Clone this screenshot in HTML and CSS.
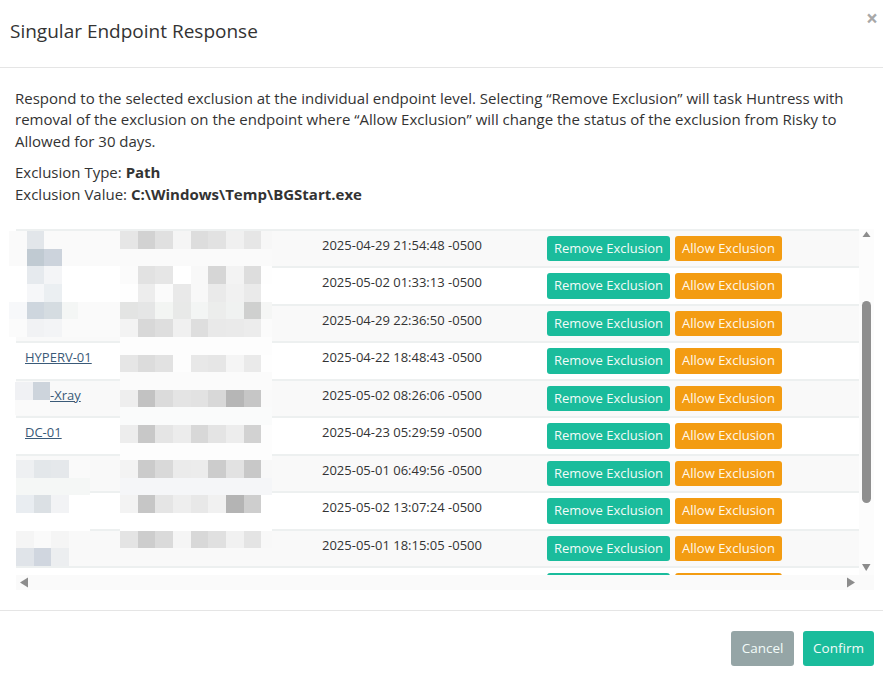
FILE: index.html
```html
<!DOCTYPE html>
<html lang="en">
<head>
<meta charset="utf-8">
<title>Singular Endpoint Response</title>
<link rel="stylesheet" href="styles.css">
</head>
<body>
<div class="modal">
  <header class="modal-header">
    <h4 class="modal-title">Singular Endpoint Response</h4>
    <button class="close" type="button">×</button>
  </header>
  <section class="modal-body">
    <p class="intro">Respond to the selected exclusion at the individual endpoint level. Selecting “Remove Exclusion” will task Huntress with removal of the exclusion on the endpoint where “Allow Exclusion” will change the status of the exclusion from Risky to Allowed for 30 days.</p>
    <p class="meta">Exclusion Type: <b>Path</b><br>Exclusion Value: <b>C:\Windows\Temp\BGStart.exe</b></p>
    <div class="frame">
      <div class="viewport">
        <div class="row odd"><span class="name"></span><span class="date">2025-04-29 21:54:48 -0500</span><span class="actions"><a class="btn teal">Remove Exclusion</a><a class="btn orange">Allow Exclusion</a></span></div>
        <div class="row"><span class="name"></span><span class="date">2025-05-02 01:33:13 -0500</span><span class="actions"><a class="btn teal">Remove Exclusion</a><a class="btn orange">Allow Exclusion</a></span></div>
        <div class="row odd"><span class="name"></span><span class="date">2025-04-29 22:36:50 -0500</span><span class="actions"><a class="btn teal">Remove Exclusion</a><a class="btn orange">Allow Exclusion</a></span></div>
        <div class="row"><span class="name"><a href="#">HYPERV-01</a></span><span class="date">2025-04-22 18:48:43 -0500</span><span class="actions"><a class="btn teal">Remove Exclusion</a><a class="btn orange">Allow Exclusion</a></span></div>
        <div class="row odd"><span class="name"><a href="#" class="xray">-Xray</a></span><span class="date">2025-05-02 08:26:06 -0500</span><span class="actions"><a class="btn teal">Remove Exclusion</a><a class="btn orange">Allow Exclusion</a></span></div>
        <div class="row"><span class="name"><a href="#">DC-01</a></span><span class="date">2025-04-23 05:29:59 -0500</span><span class="actions"><a class="btn teal">Remove Exclusion</a><a class="btn orange">Allow Exclusion</a></span></div>
        <div class="row odd"><span class="name"></span><span class="date">2025-05-01 06:49:56 -0500</span><span class="actions"><a class="btn teal">Remove Exclusion</a><a class="btn orange">Allow Exclusion</a></span></div>
        <div class="row"><span class="name"></span><span class="date">2025-05-02 13:07:24 -0500</span><span class="actions"><a class="btn teal">Remove Exclusion</a><a class="btn orange">Allow Exclusion</a></span></div>
        <div class="row odd"><span class="name"></span><span class="date">2025-05-01 18:15:05 -0500</span><span class="actions"><a class="btn teal">Remove Exclusion</a><a class="btn orange">Allow Exclusion</a></span></div>
        <div class="row"><span class="name"></span><span class="date"></span><span class="actions"><a class="btn teal"></a><a class="btn orange"></a></span></div>
      </div>
      <div class="vbar">
        <svg class="arrow" width="15" height="12" viewBox="0 0 15 12"><path d="M3.500 8 7.500 2.500 11.500 8z" fill="#8c8c8c"/></svg>
        <div class="thumb"></div>
        <svg class="arrow" width="15" height="12" viewBox="0 0 15 12"><path d="M3 1h8.500L7.200 8z" fill="#8c8c8c"/></svg>
      </div>
      <div class="hbar">
        <svg class="arrow" width="12" height="15" viewBox="0 0 12 15"><path d="M12 2.500v10L4 7.500z" fill="#8c8c8c"/></svg>
        <svg class="arrow" width="12" height="15" viewBox="0 0 12 15"><path d="M3 2.500v10L11 7.500z" fill="#8c8c8c"/></svg>
      </div>
    </div>
  </section>
  <footer class="modal-footer">
    <button class="btn-lg grey" type="button">Cancel</button>
    <button class="btn-lg teal" type="button">Confirm</button>
  </footer>

  <svg class="redaction" width="883" height="676" viewBox="0 0 883 676" shape-rendering="crispEdges" aria-hidden="true">
    <!-- middle column mosaic -->
    <rect x="120" y="337" width="152" height="18" fill="#fdfdfd"/>
    <rect x="120" y="249" width="152" height="17" fill="#fafafa"/>
    <rect x="120" y="372" width="152" height="18" fill="#fbfbfb"/>
    <rect x="120" y="407" width="152" height="18" fill="#fafbfb"/>
    <rect x="120" y="443" width="152" height="17" fill="#fdfdfd"/>
    <rect x="120" y="478" width="152" height="17" fill="#f5f6f8"/>
    <rect x="120" y="513" width="152" height="18" fill="#ffffff"/>
    <rect x="120" y="548" width="152" height="18" fill="#f9f9f9"/>

    <rect x="120" y="231" width="18" height="18" fill="#e6e6e6"/><rect x="138" y="231" width="17" height="18" fill="#d2d2d2"/><rect x="155" y="231" width="18" height="18" fill="#e0e0e0"/><rect x="173" y="231" width="18" height="18" fill="#f5f5f5"/><rect x="191" y="231" width="17" height="18" fill="#dddddd"/><rect x="208" y="231" width="18" height="18" fill="#e2e2e2"/><rect x="226" y="231" width="18" height="18" fill="#f0f0f0"/><rect x="244" y="231" width="17" height="18" fill="#e6e6e6"/><rect x="261" y="231" width="11" height="18" fill="#f7f7f7"/>

    <rect x="120" y="266" width="18" height="18" fill="#fbfbfb"/><rect x="138" y="266" width="17" height="18" fill="#e2e2e2"/><rect x="155" y="266" width="18" height="18" fill="#e6e6e6"/><rect x="173" y="266" width="18" height="18" fill="#ffffff"/><rect x="191" y="266" width="17" height="18" fill="#f8f8f8"/><rect x="208" y="266" width="18" height="18" fill="#d6d6d6"/><rect x="226" y="266" width="18" height="18" fill="#f3f3f3"/><rect x="244" y="266" width="17" height="18" fill="#dddddd"/><rect x="261" y="266" width="11" height="18" fill="#fefefe"/>

    <rect x="120" y="284" width="18" height="18" fill="#fefefe"/><rect x="138" y="284" width="17" height="18" fill="#ededed"/><rect x="155" y="284" width="18" height="18" fill="#fbfbfb"/><rect x="173" y="284" width="18" height="18" fill="#e9e9e9"/><rect x="191" y="284" width="17" height="18" fill="#f8f8f8"/><rect x="208" y="284" width="18" height="18" fill="#eaeaea"/><rect x="226" y="284" width="18" height="18" fill="#f1f1f1"/><rect x="244" y="284" width="17" height="18" fill="#eaeaea"/><rect x="261" y="284" width="11" height="18" fill="#ffffff"/>

    <rect x="120" y="302" width="18" height="17" fill="#e3e4e3"/><rect x="138" y="302" width="17" height="17" fill="#e5e6e6"/><rect x="155" y="302" width="18" height="17" fill="#f3f5f3"/><rect x="173" y="302" width="18" height="17" fill="#e8e9e8"/><rect x="191" y="302" width="17" height="17" fill="#f3f5f4"/><rect x="208" y="302" width="18" height="17" fill="#ecedec"/><rect x="226" y="302" width="18" height="17" fill="#f0f2f1"/><rect x="244" y="302" width="17" height="17" fill="#cfd0cf"/><rect x="261" y="302" width="11" height="17" fill="#f5f6f5"/>

    <rect x="120" y="319" width="18" height="18" fill="#f3f3f3"/><rect x="138" y="319" width="17" height="18" fill="#d8d8d8"/><rect x="155" y="319" width="18" height="18" fill="#dedede"/><rect x="173" y="319" width="18" height="18" fill="#f0f0f0"/><rect x="191" y="319" width="17" height="18" fill="#dedede"/><rect x="208" y="319" width="18" height="18" fill="#e9e9e9"/><rect x="226" y="319" width="18" height="18" fill="#eaeaea"/><rect x="244" y="319" width="17" height="18" fill="#ececec"/><rect x="261" y="319" width="11" height="18" fill="#fbfbfb"/>

    <rect x="120" y="355" width="18" height="17" fill="#e6e6e6"/><rect x="138" y="355" width="17" height="17" fill="#dcdcdc"/><rect x="155" y="355" width="18" height="17" fill="#e2e2e2"/><rect x="173" y="355" width="18" height="17" fill="#fdfdfd"/><rect x="191" y="355" width="17" height="17" fill="#e8e8e8"/><rect x="208" y="355" width="18" height="17" fill="#e6e6e6"/><rect x="226" y="355" width="18" height="17" fill="#f5f5f5"/><rect x="244" y="355" width="17" height="17" fill="#eaeaea"/><rect x="261" y="355" width="11" height="17" fill="#fefefe"/>

    <rect x="120" y="390" width="18" height="17" fill="#eeeeee"/><rect x="138" y="390" width="17" height="17" fill="#c2c2c2"/><rect x="155" y="390" width="18" height="17" fill="#dbdbdb"/><rect x="173" y="390" width="18" height="17" fill="#e4e4e4"/><rect x="191" y="390" width="17" height="17" fill="#e2e2e2"/><rect x="208" y="390" width="18" height="17" fill="#d8d8d8"/><rect x="226" y="390" width="18" height="17" fill="#b6b6b6"/><rect x="244" y="390" width="17" height="17" fill="#c6c6c6"/><rect x="261" y="390" width="11" height="17" fill="#fafafa"/>

    <rect x="120" y="425" width="18" height="18" fill="#ededed"/><rect x="138" y="425" width="17" height="18" fill="#c8c8c8"/><rect x="155" y="425" width="18" height="18" fill="#e5e5e5"/><rect x="173" y="425" width="18" height="18" fill="#ececec"/><rect x="191" y="425" width="17" height="18" fill="#d8d8d8"/><rect x="208" y="425" width="18" height="18" fill="#e4e4e4"/><rect x="226" y="425" width="18" height="18" fill="#ededed"/><rect x="244" y="425" width="17" height="18" fill="#d2d2d2"/><rect x="261" y="425" width="11" height="18" fill="#fdfdfd"/>

    <rect x="120" y="460" width="18" height="18" fill="#f3f3f3"/><rect x="138" y="460" width="17" height="18" fill="#cbcbcb"/><rect x="155" y="460" width="18" height="18" fill="#d9d9d9"/><rect x="173" y="460" width="18" height="18" fill="#ebebeb"/><rect x="191" y="460" width="17" height="18" fill="#ececec"/><rect x="208" y="460" width="18" height="18" fill="#cccccc"/><rect x="226" y="460" width="18" height="18" fill="#e2e2e2"/><rect x="244" y="460" width="17" height="18" fill="#c8c8c8"/><rect x="261" y="460" width="11" height="18" fill="#f8f8f8"/>

    <rect x="120" y="495" width="18" height="18" fill="#f3f3f3"/><rect x="138" y="495" width="17" height="18" fill="#c6c6c6"/><rect x="155" y="495" width="18" height="18" fill="#e5e5e5"/><rect x="173" y="495" width="18" height="18" fill="#eeeeee"/><rect x="191" y="495" width="17" height="18" fill="#e8e8e8"/><rect x="208" y="495" width="18" height="18" fill="#f1f1f1"/><rect x="226" y="495" width="18" height="18" fill="#b4b4b4"/><rect x="244" y="495" width="17" height="18" fill="#cecece"/><rect x="261" y="495" width="11" height="18" fill="#ffffff"/>

    <rect x="120" y="531" width="18" height="17" fill="#e4e4e4"/><rect x="138" y="531" width="17" height="17" fill="#cdcdcd"/><rect x="155" y="531" width="18" height="17" fill="#dadada"/><rect x="173" y="531" width="18" height="17" fill="#f5f5f5"/><rect x="191" y="531" width="17" height="17" fill="#d8d8d8"/><rect x="208" y="531" width="18" height="17" fill="#e0e0e0"/><rect x="226" y="531" width="18" height="17" fill="#f1f1f1"/><rect x="244" y="531" width="17" height="17" fill="#e4e4e4"/><rect x="261" y="531" width="11" height="17" fill="#f8f8f8"/>

    <!-- first column mosaic, upper group -->
    <rect x="9" y="231" width="111" height="35" fill="#fafafa"/>
    <rect x="27" y="231" width="17" height="18" fill="#e2e6ea"/>
    <rect x="27" y="249" width="17" height="17" fill="#c0cad2"/>
    <rect x="44" y="249" width="18" height="17" fill="#ccd3dc"/>
    <rect x="9" y="266" width="111" height="36" fill="#ffffff"/>
    <rect x="27" y="266" width="17" height="18" fill="#e6eaee"/>
    <rect x="44" y="266" width="18" height="18" fill="#f4f5f7"/>
    <rect x="27" y="284" width="17" height="18" fill="#f6f7f9"/>
    <rect x="44" y="284" width="18" height="18" fill="#ebeff2"/>
    <rect x="9" y="302" width="111" height="35" fill="#fafafa"/>
    <rect x="9" y="302" width="18" height="17" fill="#f7f8fa"/>
    <rect x="27" y="302" width="17" height="17" fill="#ced6de"/>
    <rect x="44" y="302" width="18" height="17" fill="#d5dce1"/>
    <rect x="62" y="302" width="16" height="17" fill="#f4f6f5"/>
    <rect x="9" y="319" width="18" height="18" fill="#fbfbfb"/>
    <rect x="27" y="319" width="17" height="18" fill="#f1f2f4"/>
    <rect x="44" y="319" width="18" height="18" fill="#f3f4f6"/>

    <!-- name prefix on the -Xray row -->
    <rect x="15" y="382" width="35" height="33" fill="#fafafa"/>
    <rect x="15" y="382" width="18" height="18" fill="#f0f1f4"/>
    <rect x="33" y="382" width="17" height="18" fill="#cdd4dc"/>

    <!-- first column mosaic, lower group -->
    <rect x="16" y="460" width="74" height="18" fill="#fafafa"/>
    <rect x="16" y="460" width="18" height="18" fill="#eef0f2"/>
    <rect x="34" y="460" width="17" height="18" fill="#e3e7ea"/>
    <rect x="51" y="460" width="18" height="18" fill="#e5e8eb"/>
    <rect x="16" y="478" width="74" height="17" fill="#f5f7f6"/>
    <rect x="16" y="495" width="74" height="36" fill="#ffffff"/>
    <rect x="16" y="495" width="18" height="18" fill="#e9edf1"/>
    <rect x="34" y="495" width="17" height="18" fill="#dbe0e4"/>
    <rect x="51" y="495" width="18" height="18" fill="#f2f3f5"/>
    <rect x="16" y="531" width="18" height="17" fill="#f5f5f5"/>
    <rect x="34" y="531" width="17" height="17" fill="#fafafa"/>
    <rect x="51" y="531" width="18" height="17" fill="#f5f5f5"/>
    <rect x="16" y="548" width="18" height="18" fill="#e0e4e9"/>
    <rect x="34" y="548" width="17" height="18" fill="#d0d6df"/>
    <rect x="51" y="548" width="18" height="18" fill="#eceef0"/>
  </svg>
</div>
</body>
</html>
```
FILE: styles.css
```css
* { box-sizing: border-box; }
html, body { margin: 0; padding: 0; background: #fff; }
body { font-family: "Open Sans", sans-serif; color: #333; }

.modal { position: relative; width: 883px; height: 676px; overflow: hidden; }
.redaction { position: absolute; top: 0; left: 0; pointer-events: none; }

.modal-header { display: flex; justify-content: space-between; height: 68px; padding: 0 5px 0 10px; border-bottom: 1px solid #e5e5e5; }
.modal-title { margin: 0; padding-top: 17px; font-size: 19px; line-height: 28px; font-weight: 400; color: #333; }
.close { align-self: flex-start; margin-top: 5px; padding: 0; border: 0; background: none; font-family: "Open Sans", sans-serif; font-size: 21px; line-height: 26px; font-weight: 700; color: #a8a8a8; }

.modal-body { height: 542px; padding: 20px 9px 0 15px; font-size: 15px; line-height: 21.43px; }
.intro { margin: 0 0 10px; }
.meta { margin: 0 0 23.55px; }
.meta b { font-weight: 700; color: #333; }

.frame { display: grid; grid-template-columns: 843px 15px; grid-template-rows: 346px 15px; margin-left: 1px; font-size: 13px; }
.viewport { overflow: hidden; background: #fff; }
.row { display: grid; grid-template-columns: 306px 225px 1fr; height: 37.5px; border-top: 2px solid #edf0f0; }
.row.odd { background: #f9f9f9; }
.name { padding: 6px 0 0 9px; line-height: 17px; }
.name a { color: #3a5a78; text-decoration: underline; }
.name a.xray { margin-left: 25px; }
.date { padding-top: 6px; line-height: 17px; color: #333; }
.actions { display: flex; gap: 5px; padding-top: 5px; }

.btn { display: block; flex: none; width: 123px; height: 25.5px; border-radius: 3px; font-size: 13px; line-height: 25px; text-align: center; white-space: nowrap; color: #f2fbf8; }
.teal { background: #1abc9c; }
.orange { width: 107px; background: #f39c12; color: #fff8ec; }

.vbar { display: flex; flex-direction: column; align-items: center; background: #fcfcfc; }
.vbar .arrow { flex: none; }
.thumb { width: 9px; height: 202px; margin: 60px 0 auto; border-radius: 5px; background: #8f8f8f; }
.hbar { grid-column: 1 / 3; display: flex; justify-content: space-between; align-items: center; padding-right: 18px; background: #fafafa; }

.modal-footer { display: flex; justify-content: flex-end; gap: 9px; height: 66px; padding: 20px 9px 0 0; border-top: 1px solid #e5e5e5; }
.btn-lg { height: 35px; padding: 0 0 2px; border: 0; border-radius: 3px; font-family: "Open Sans", sans-serif; font-size: 13.5px; color: #f2fbf8; }
.grey { width: 63px; background: #95a5a6; }
.modal-footer .teal { width: 71px; }
```
